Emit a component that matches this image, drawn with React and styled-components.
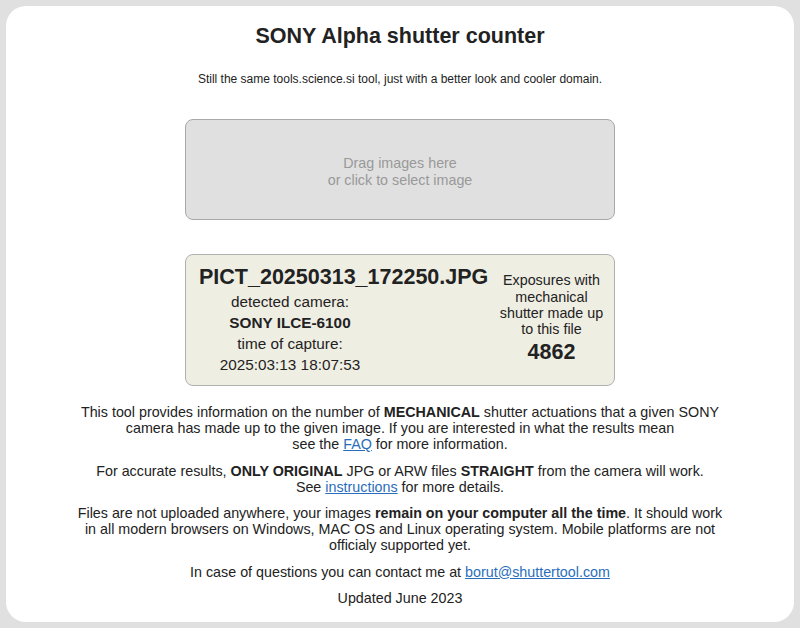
import React from "react";
import styled, { createGlobalStyle } from "styled-components";

const Global = createGlobalStyle`
  html, body { margin: 0; padding: 0; }
  body {
    background: #e0e0e0;
    font-family: "Liberation Sans", Arial, sans-serif;
    color: #222;
    padding: 6px;
    box-sizing: border-box;
    height: 628px;
  }
`;

const Card = styled.div`
  background: #fff;
  border-radius: 20px;
  height: 616px;
  box-sizing: border-box;
  padding: 18px 40px 0;
  display: flex;
  flex-direction: column;
  align-items: center;
  text-align: center;
`;

const Title = styled.h1`
  margin: 0;
  font-size: 21.5px;
  line-height: 24px;
  font-weight: bold;
  color: #222;
`;

const Subtitle = styled.p`
  margin: 24px 0 0;
  font-size: 12px;
  line-height: 14px;
  color: #222;
`;

const DropZone = styled.div`
  margin-top: 33px;
  width: 430px;
  height: 101px;
  box-sizing: border-box;
  background: #e0e0e0;
  border: 1px solid #a8a8a8;
  border-radius: 8px;
  display: flex;
  flex-direction: column;
  align-items: center;
  justify-content: center;
  padding-top: 4px;
  color: #999;
  font-size: 14.3px;
  line-height: 17px;
  cursor: pointer;
`;

const ResultBox = styled.div`
  margin-top: 34px;
  width: 430px;
  height: 132px;
  box-sizing: border-box;
  background: #efeee2;
  border: 1px solid #b0b0b0;
  border-radius: 8px;
  display: grid;
  grid-template-columns: 190px 1fr;
  align-items: center;
  padding: 0 8px 0 9px;
  color: #222;
`;

const LeftCol = styled.div`
  display: flex;
  flex-direction: column;
  align-items: flex-start;
`;

const FileName = styled.div`
  font-size: 21.5px;
  font-weight: bold;
  line-height: 24px;
  white-space: nowrap;
  padding-left: 4px;
  margin-bottom: 2px;
`;

const InfoLine = styled.div`
  width: 190px;
  font-size: 15.3px;
  line-height: 21px;
  white-space: nowrap;
  font-weight: ${(p) => (p.$bold ? "bold" : "normal")};
`;

const RightCol = styled.div`
  display: flex;
  flex-direction: column;
  align-items: center;
  font-size: 14.3px;
  line-height: 16.3px;
  padding-left: 112px;
  margin-bottom: 4px;
`;

const Count = styled.div`
  font-size: 21.5px;
  font-weight: bold;
  line-height: 24px;
  margin-top: 2px;
`;

const Para = styled.p`
  margin: ${(p) => (p.$first ? "18px" : "10px")} 0 0;
  font-size: 14.3px;
  line-height: 16.2px;
  color: #222;
  max-width: 652px;
`;

const Link = styled.a`
  color: #2a6ebb;
  text-decoration: underline;
`;

export default function App() {
  return (
    <>
      <Global />
      <Card>
        <Title>SONY Alpha shutter counter</Title>
        <Subtitle>
          Still the same tools.science.si tool, just with a better look and cooler domain.
        </Subtitle>
        <DropZone>
          <div>Drag images here</div>
          <div>or click to select image</div>
        </DropZone>
        <ResultBox>
          <LeftCol>
            <FileName>PICT_20250313_172250.JPG</FileName>
            <InfoLine>detected camera:</InfoLine>
            <InfoLine $bold>SONY ILCE-6100</InfoLine>
            <InfoLine>time of capture:</InfoLine>
            <InfoLine>2025:03:13 18:07:53</InfoLine>
          </LeftCol>
          <RightCol>
            <div>Exposures with</div>
            <div>mechanical</div>
            <div>shutter made up</div>
            <div>to this file</div>
            <Count>4862</Count>
          </RightCol>
        </ResultBox>
        <Para $first>
          This tool provides information on the number of <b>MECHANICAL</b> shutter
          actuations that a given SONY camera has made up to the given image. If you are
          interested in what the results mean
          <br />
          see the <Link href="#">FAQ</Link> for more information.
        </Para>
        <Para>
          For accurate results, <b>ONLY ORIGINAL</b> JPG or ARW files <b>STRAIGHT</b> from
          the camera will work.
          <br />
          See <Link href="#">instructions</Link> for more details.
        </Para>
        <Para>
          Files are not uploaded anywhere, your images{" "}
          <b>remain on your computer all the time</b>. It should work in all modern browsers
          on Windows, MAC OS and Linux operating system. Mobile platforms are not officialy
          supported yet.
        </Para>
        <Para>
          In case of questions you can contact me at{" "}
          <Link href="#">borut@shuttertool.com</Link>
        </Para>
        <Para>Updated June 2023</Para>
      </Card>
    </>
  );
}
